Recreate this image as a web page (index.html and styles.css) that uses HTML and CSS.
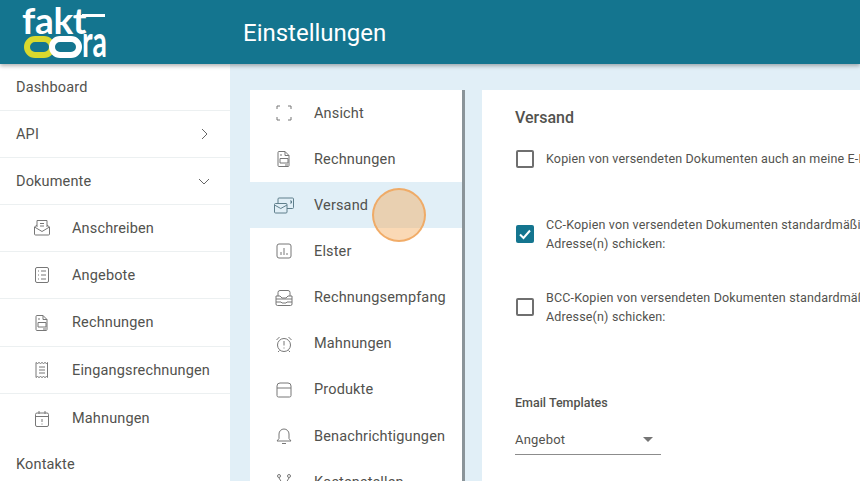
FILE: index.html
```html
<!DOCTYPE html>
<html lang="de">
<head>
  <meta charset="UTF-8" />
  <title>Einstellungen</title>
  <link rel="stylesheet" href="styles.css">
</head>
<body>

<header class="topbar">
  <div class="logo">
    <div class="logo-top"><span>fakt</span><i class="logo-bar"></i></div>
    <div class="logo-bottom">
      <svg class="logo-rings" width="60" height="24" viewBox="0 0 60 24">
        <rect x="5" y="4" width="25" height="16" rx="8" fill="none" stroke="#d9d92e" stroke-width="6"/>
        <rect x="30" y="4" width="27" height="16" rx="8" fill="none" stroke="#fff" stroke-width="6"/>
      </svg>
      <span>ra</span>
    </div>
  </div>
  <h1>Einstellungen</h1>
</header>

<div class="main">
  <aside class="sidebar">
    <a class="side-row">Dashboard</a>
    <a class="side-row">API
      <svg class="chev" width="12" height="12" viewBox="0 0 12 12"><path d="M4 1l5 5-5 5" fill="none" stroke="#666" stroke-width="1"/></svg>
    </a>
    <a class="side-row">Dokumente
      <svg class="chev" width="12" height="12" viewBox="0 0 12 12"><path d="M1 4l5 5 5-5" fill="none" stroke="#666" stroke-width="1"/></svg>
    </a>
    <a class="side-row sub">
      <svg width="18" height="18" viewBox="0 0 18 18"><path d="M4 8V1.500h10V8M1.500 8L4 6M16.500 8L14 6M1.500 8v7a1 1 0 001 1h13a1 1 0 001-1V8L9 12.500zM7 4.500h4M7 7h4"/></svg>
      Anschreiben</a>
    <a class="side-row sub">
      <svg width="18" height="18" viewBox="0 0 18 18"><rect x="2.500" y="1.500" width="13" height="15" rx="1.500"/><path d="M5 5h1M8 5h5M5 9h1M8 9h5M5 13h1M8 13h5"/></svg>
      Angebote</a>
    <a class="side-row sub tall">
      <svg width="18" height="18" viewBox="0 0 18 18"><path d="M4 1.500h6l4 4v10a1 1 0 01-1 1H4a1 1 0 01-1-1v-13a1 1 0 011-1zM10 1.500v4h4M5 8.500h8v4.500H5zM5 5h2M10 15h3"/></svg>
      Rechnungen</a>
    <a class="side-row sub">
      <svg width="18" height="18" viewBox="0 0 18 18"><path d="M3 1.500l1.500 1 1.500-1 1.500 1 1.500-1 1.500 1 1.500-1 1.500 1 1-1v15l-1-1-1.500 1-1.500-1-1.500 1-1.500-1-1.500 1-1.500-1-1.500 1zM6 6h6M6 9h6M6 12h6"/></svg>
      Eingangsrechnungen</a>
    <a class="side-row sub last">
      <svg width="18" height="18" viewBox="0 0 18 18"><rect x="2.500" y="3" width="13" height="13.500" rx="1.500"/><path d="M2.500 6.500h13M6 1v3M12 1v3M9 9v3M9 13.500v1"/></svg>
      Mahnungen</a>
    <a class="side-row plain">Kontakte</a>
  </aside>

  <section class="content">
    <nav class="settings-nav">
      <a class="nav-row">
        <svg width="20" height="18" viewBox="0 0 20 18"><path d="M3 5V2h3M14 2h3v3M17 13v3h-3M6 16H3v-3"/></svg>
        Ansicht</a>
      <a class="nav-row">
        <svg width="20" height="18" viewBox="0 0 20 18"><path d="M5 1.500h6l4 4v10a1 1 0 01-1 1H5a1 1 0 01-1-1v-13a1 1 0 011-1zM11 1.500v4h4M6 8.500h8v4.500H6zM6 5h2M11 15h3"/></svg>
        Rechnungen</a>
      <a class="nav-row active">
        <svg width="20" height="18" viewBox="0 0 20 18"><path d="M4 7V3a1 1 0 011-1h13.500a1 1 0 011 1v8.500a1 1 0 01-1 1H13M16 5h1.500v2H16M1.500 7.500H12a1 1 0 011 1V16a1 1 0 01-1 1H1.500a1 1 0 01-1-1V8.500a1 1 0 011-1zM.5 9l6.250 3.500L13 9"/></svg>
        Versand</a>
      <a class="nav-row">
        <svg width="20" height="18" viewBox="0 0 20 18"><rect x="3" y="2" width="14" height="14" rx="2"/><path d="M7 13v-3M10 13V6M13 13v-2"/></svg>
        Elster</a>
      <a class="nav-row">
        <svg width="20" height="18" viewBox="0 0 20 18"><path d="M4 7V3.500a2 2 0 012-2h8a2 2 0 012 2V7M2 7h4l2 2h4l2-2h4v3H2zM2 10v5a1.500 1.500 0 001.500 1.500h13A1.500 1.500 0 0018 15v-5M2 13h5l1 1h4l1-1h5"/></svg>
        Rechnungsempfang</a>
      <a class="nav-row">
        <svg width="20" height="18" viewBox="0 0 20 18"><circle cx="10" cy="10" r="6.500"/><path d="M2.500 5l3-3M17.500 5l-3-3M10 6v4.500M10 12.500v1M5.500 15.500L4 17M14.500 15.500L16 17"/></svg>
        Mahnungen</a>
      <a class="nav-row">
        <svg width="20" height="18" viewBox="0 0 20 18"><path d="M3 7V5a3 3 0 013-3h8a3 3 0 013 3v2M3 7h14v7.500a1.500 1.500 0 01-1.500 1.500h-11A1.500 1.500 0 013 14.500z"/></svg>
        Produkte</a>
      <a class="nav-row">
        <svg width="20" height="18" viewBox="0 0 20 18"><path d="M3 14h14l-2-2.500V7a5 5 0 00-10 0v4.500zM8 16.500h4"/></svg>
        Benachrichtigungen</a>
      <a class="nav-row">
        <svg width="20" height="18" viewBox="0 0 20 18"><circle cx="5" cy="3" r="1.500"/><circle cx="15" cy="3" r="1.500"/><circle cx="10" cy="15" r="1.500"/><path d="M5 5l5 8M15 5l-5 8"/></svg>
        Kostenstellen</a>
    </nav>

    <div class="panel">
      <h2>Versand</h2>

      <div class="check-row first">
        <span class="box"></span>
        <p>Kopien von versendeten Dokumenten auch an meine E-Mail-Adresse schicken</p>
      </div>

      <div class="check-row second">
        <span class="box checked">
          <svg width="18" height="18" viewBox="0 0 18 18"><path d="M4 9.500l3.500 3.500L14 5.500" fill="none" stroke="#fff" stroke-width="2"/></svg>
        </span>
        <p>CC-Kopien von versendeten Dokumenten standardmäßig an folgende E-Mail-<br>Adresse(n) schicken:</p>
      </div>

      <div class="check-row third">
        <span class="box"></span>
        <p>BCC-Kopien von versendeten Dokumenten standardmäßig an folgende E-Mail-<br>Adresse(n) schicken:</p>
      </div>

      <h3>Email Templates</h3>
      <div class="select">
        <span>Angebot</span>
        <i class="caret"></i>
      </div>
    </div>
  </section>
</div>

<div class="click-marker"></div>

</body>
</html>
```

FILE: styles.css
```css
body, html {
  margin: 0;
  padding: 0;
  height: 100%;
  overflow: hidden;
  font-family: Roboto, sans-serif;
  color: #52524e;
  background: #e1eff7;
}

.topbar {
  position: relative;
  z-index: 2;
  height: 64px;
  display: flex;
  align-items: center;
  background: #14758f;
  box-shadow: 0 2px 4px rgba(0,0,0,0.3);
  color: #fff;
}

.topbar h1 {
  margin: 2px 0 0 243px;
  font-size: 24px;
  font-weight: 400;
}

.logo {
  position: absolute;
  left: 22px;
  top: 4px;
  width: 86px;
  color: #fff;
  font-family: Lato, sans-serif;
  font-weight: 700;
  font-size: 37px;
  line-height: 32px;
}

.logo-top, .logo-bottom {
  display: flex;
  height: 31px;
}

.logo-top span {
  letter-spacing: -0.3px;
}

.logo-bar {
  width: 23px;
  height: 3px;
  margin: 10px 0 0 -4px;
  background: #fff;
}

.logo-bottom {
  align-items: flex-start;
}

.logo-bottom span {
  margin: -15px 0 0 0;
  font-size: 43px;
  line-height: 42px;
  transform: scaleX(0.66);
  transform-origin: left center;
}

.logo-rings {
  flex: none;
}

.main {
  display: flex;
  height: 417px;
  overflow: hidden;
}

.sidebar {
  width: 230px;
  flex: none;
  background: #fff;
}

.side-row {
  display: flex;
  align-items: center;
  height: 46px;
  padding: 0 20px 0 16px;
  border-bottom: 1px solid #ecf0f1;
  font-size: 14.5px;
  letter-spacing: 0.15px;
}

.side-row .chev {
  margin-left: auto;
}

.side-row.sub {
  padding-left: 33px;
  gap: 21px;
}

.side-row.tall {
  height: 47px;
}

.side-row.last {
  height: 49px;
  border-bottom: none;
}

.side-row.plain {
  height: 43px;
  border-bottom: none;
}

.sidebar svg:not(.chev), .settings-nav svg {
  flex: none;
  fill: none;
  stroke: #777;
  stroke-width: 1;
}

.content {
  flex: 1;
  display: flex;
  padding: 26px 0 0 20px;
  min-width: 0;
}

.settings-nav {
  width: 212px;
  flex: none;
  height: 391px;
  overflow: hidden;
  background: #fff;
  border-right: 3px solid #8a9499;
}

.nav-row {
  display: flex;
  align-items: center;
  height: 46.15px;
  padding-left: 24px;
  gap: 20px;
  font-size: 14.5px;
  letter-spacing: 0.15px;
}

.nav-row.active {
  background: #e1eff7;
}

.settings-nav .nav-row.active svg {
  stroke: #5f7f8c;
}

.panel {
  flex: 1;
  margin-left: 17px;
  padding: 0 0 0 33px;
  height: 391px;
  background: #fff;
  overflow: hidden;
  white-space: nowrap;
}

.panel h2 {
  margin: 18px 0 0;
  font-size: 16px;
  line-height: 19px;
  font-weight: 500;
}

.check-row {
  display: flex;
  align-items: center;
  gap: 12px;
  font-size: 12.5px;
  line-height: 19px;
  letter-spacing: 0.16px;
}

.check-row p {
  margin: 0;
}

.check-row.first { margin-top: 22px; }
.check-row.second { margin-top: 47px; }
.check-row.third { margin-top: 35px; }

.box {
  flex: none;
  box-sizing: border-box;
  width: 18px;
  height: 18px;
  margin-left: 1px;
  border: 2px solid #6f6f6f;
  border-radius: 2px;
}

.box.checked {
  border: none;
  background: #14758f;
}

.box svg {
  display: block;
}

.panel h3 {
  margin: 69px 0 0;
  font-size: 12.5px;
  line-height: 16px;
  font-weight: 500;
}

.select {
  width: 146px;
  height: 31px;
  margin-top: 13px;
  display: flex;
  align-items: center;
  justify-content: space-between;
  border-bottom: 1px solid #8c8c8c;
  font-size: 13px;
  letter-spacing: 0.2px;
  box-sizing: border-box;
}

.caret {
  width: 0;
  height: 0;
  margin-right: 8px;
  border-left: 5px solid transparent;
  border-right: 5px solid transparent;
  border-top: 5px solid #757575;
}

.click-marker {
  position: absolute;
  left: 372px;
  top: 188px;
  box-sizing: border-box;
  width: 54px;
  height: 54px;
  border-radius: 50%;
  background: rgba(245,170,90,0.45);
  border: 2px solid rgba(240,165,90,0.85);
}
```
